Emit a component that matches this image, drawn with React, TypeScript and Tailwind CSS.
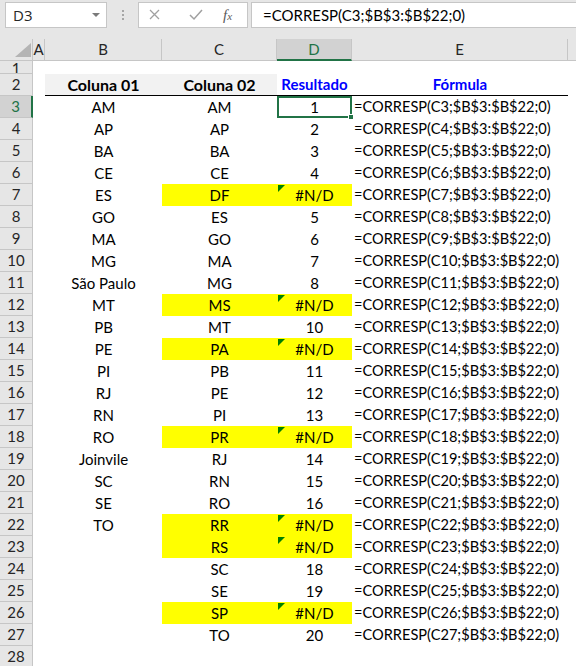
import React from "react"

const colB = ["AM", "AP", "BA", "CE", "ES", "GO", "MA", "MG", "São Paulo", "MT", "PB", "PE", "PI", "RJ", "RN", "RO", "Joinvile", "SC", "SE", "TO"]
const colC = ["AM", "AP", "BA", "CE", "DF", "ES", "GO", "MA", "MG", "MS", "MT", "PA", "PB", "PE", "PI", "PR", "RJ", "RN", "RO", "RR", "RS", "SC", "SE", "SP", "TO"]

// D = posição de C em B (CORRESP), ou #N/D
const colD = colC.map((v) => {
  const i = colB.indexOf(v)
  return i < 0 ? "#N/D" : String(i + 1)
})

function RowHead({ n, active }: { n: number; active?: boolean }) {
  return (
    <div
      className={`h-[22px] w-[33px] shrink-0 flex items-center justify-center border-b border-r border-[#c6c6c6] text-[15px] ${
        active ? "bg-[#d2d2d2] text-[#217346] border-r-2 border-r-[#217346]" : "bg-[#e6e6e6] text-[#262626]"
      }`}
    >
      {n}
    </div>
  )
}

function DataRow({ r }: { r: number }) {
  const i = r - 3
  const b = colB[i] ?? ""
  const c = colC[i] ?? ""
  const d = colD[i] ?? ""
  const e = i < colC.length ? `=CORRESP(C${r};$B$3:$B$22;0)` : ""
  const err = d === "#N/D"
  const selected = r === 3
  return (
    <div className="flex h-[22px]">
      <RowHead n={r} active={selected} />
      <div className="w-[12px] shrink-0" />
      <div className="w-[117px] shrink-0 flex items-center justify-center text-[15px]">{b}</div>
      <div className={`w-[115px] shrink-0 flex items-center justify-center text-[15px] ${err ? "bg-[#ffff00]" : ""}`}>{c}</div>
      <div
        className={`relative w-[75px] shrink-0 flex items-center justify-center text-[15px] ${err ? "bg-[#ffff00]" : ""} ${
          selected ? "border-2 border-[#217346]" : ""
        }`}
      >
        {err && <span className="absolute left-[1px] top-[1px] w-0 h-0 border-t-[7px] border-r-[7px] border-t-[#008000] border-r-transparent" />}
        {d}
        {selected && <span className="absolute right-[-4px] bottom-[-4px] w-[6px] h-[6px] bg-[#217346] border border-white" />}
      </div>
      <div className="w-[216px] shrink-0 flex items-center pl-[2px] text-[14.6px] whitespace-nowrap">{e}</div>
    </div>
  )
}

export default function App() {
  const rows = Array.from({ length: 26 }, (_, k) => k + 3)
  return (
    <div className="w-[576px] h-[666px] overflow-hidden bg-white text-black font-['Lato',sans-serif]">
      {/* barra de fórmulas */}
      <div className="h-[39px] bg-[#e6e6e6] flex items-start pt-[2px] pl-[5px]">
        <div className="w-[102px] h-[26px] bg-white border border-[#c6c6c6] flex items-center justify-between pl-[7px] pr-[6px] text-[15px] text-[#262626] font-['Open_Sans',sans-serif]">
          <span>D3</span>
          <span className="w-0 h-0 border-l-[4px] border-r-[4px] border-t-[4px] border-l-transparent border-r-transparent border-t-[#7a7a7a]" />
        </div>
        <div className="w-[31px] h-[26px] flex flex-col items-center justify-center gap-[2px]">
          <span className="w-[2px] h-[2px] bg-[#a6a6a6]" />
          <span className="w-[2px] h-[2px] bg-[#a6a6a6]" />
          <span className="w-[2px] h-[2px] bg-[#a6a6a6]" />
        </div>
        <div className="w-[110px] h-[26px] bg-white border border-[#c6c6c6] flex items-center">
          <svg width="40" height="26" viewBox="0 0 40 26" className="shrink-0">
            <path d="M11 8 L20 17 M20 8 L11 17" stroke="#a0a0a0" strokeWidth="1.3" fill="none" />
          </svg>
          <svg width="40" height="26" viewBox="0 0 40 26" className="shrink-0">
            <path d="M11 13 L15 17 L23 8" stroke="#a0a0a0" strokeWidth="1.5" fill="none" />
          </svg>
          <span className="text-[15px] italic text-[#5a5a5a] font-['Liberation_Serif',serif] ml-[4px]">
            f<span className="text-[11px]">x</span>
          </span>
        </div>
        <div className="ml-[3px] flex-1 h-[26px] bg-white border border-[#c6c6c6] border-r-0 flex items-center pl-[11px] text-[15px]">
          =CORRESP(C3;$B$3:$B$22;0)
        </div>
      </div>

      {/* cabeçalho das colunas */}
      <div className="flex h-[22px] bg-[#e6e6e6] text-[15px] text-[#262626]">
        <div className="relative w-[33px] shrink-0 border-r border-b border-[#c6c6c6]">
          <svg width="33" height="22" viewBox="0 0 33 22" className="absolute inset-0">
            <path d="M31 4 L31 18 L15 18 Z" fill="#b4b4b4" />
          </svg>
        </div>
        <div className="w-[12px] shrink-0 flex items-center justify-center border-r border-b border-[#c6c6c6]">A</div>
        <div className="w-[117px] shrink-0 flex items-center justify-center border-r border-b border-[#c6c6c6]">B</div>
        <div className="w-[115px] shrink-0 flex items-center justify-center border-r border-b border-[#c6c6c6]">C</div>
        <div className="w-[75px] shrink-0 flex items-center justify-center bg-[#d2d2d2] text-[#217346] border-r border-[#c6c6c6] border-b-2 border-b-[#217346]">D</div>
        <div className="w-[216px] shrink-0 flex items-center justify-center border-r border-b border-[#c6c6c6]">E</div>
        <div className="flex-1 border-b border-[#c6c6c6]" />
      </div>

      {/* linha 1 (baixa) */}
      <div className="flex h-[13px]">
        <div className="h-[13px] w-[33px] shrink-0 overflow-hidden flex items-end justify-center border-b border-r border-[#c6c6c6] bg-[#e6e6e6] text-[15px] text-[#262626] leading-[15px]">
          <span className="-mb-[3px]">1</span>
        </div>
      </div>

      {/* linha 2: cabeçalhos da tabela */}
      <div className="flex h-[22px]">
        <RowHead n={2} />
        <div className="w-[12px] shrink-0" />
        <div className="w-[232px] shrink-0 flex bg-[#f2f2f2] border-b border-black">
          <div className="w-[117px] flex items-center justify-center text-[16px] font-bold">Coluna 01</div>
          <div className="w-[115px] flex items-center justify-center text-[16px] font-bold">Coluna 02</div>
        </div>
        <div className="w-[75px] shrink-0 flex items-center justify-center text-[15px] font-bold text-[#0000ff] border-b border-black">Resultado</div>
        <div className="w-[216px] shrink-0 flex items-center justify-center text-[15px] font-bold text-[#0000ff] border-b border-black">Fórmula</div>
      </div>

      {rows.map((r) => (
        <DataRow key={r} r={r} />
      ))}
    </div>
  )
}
